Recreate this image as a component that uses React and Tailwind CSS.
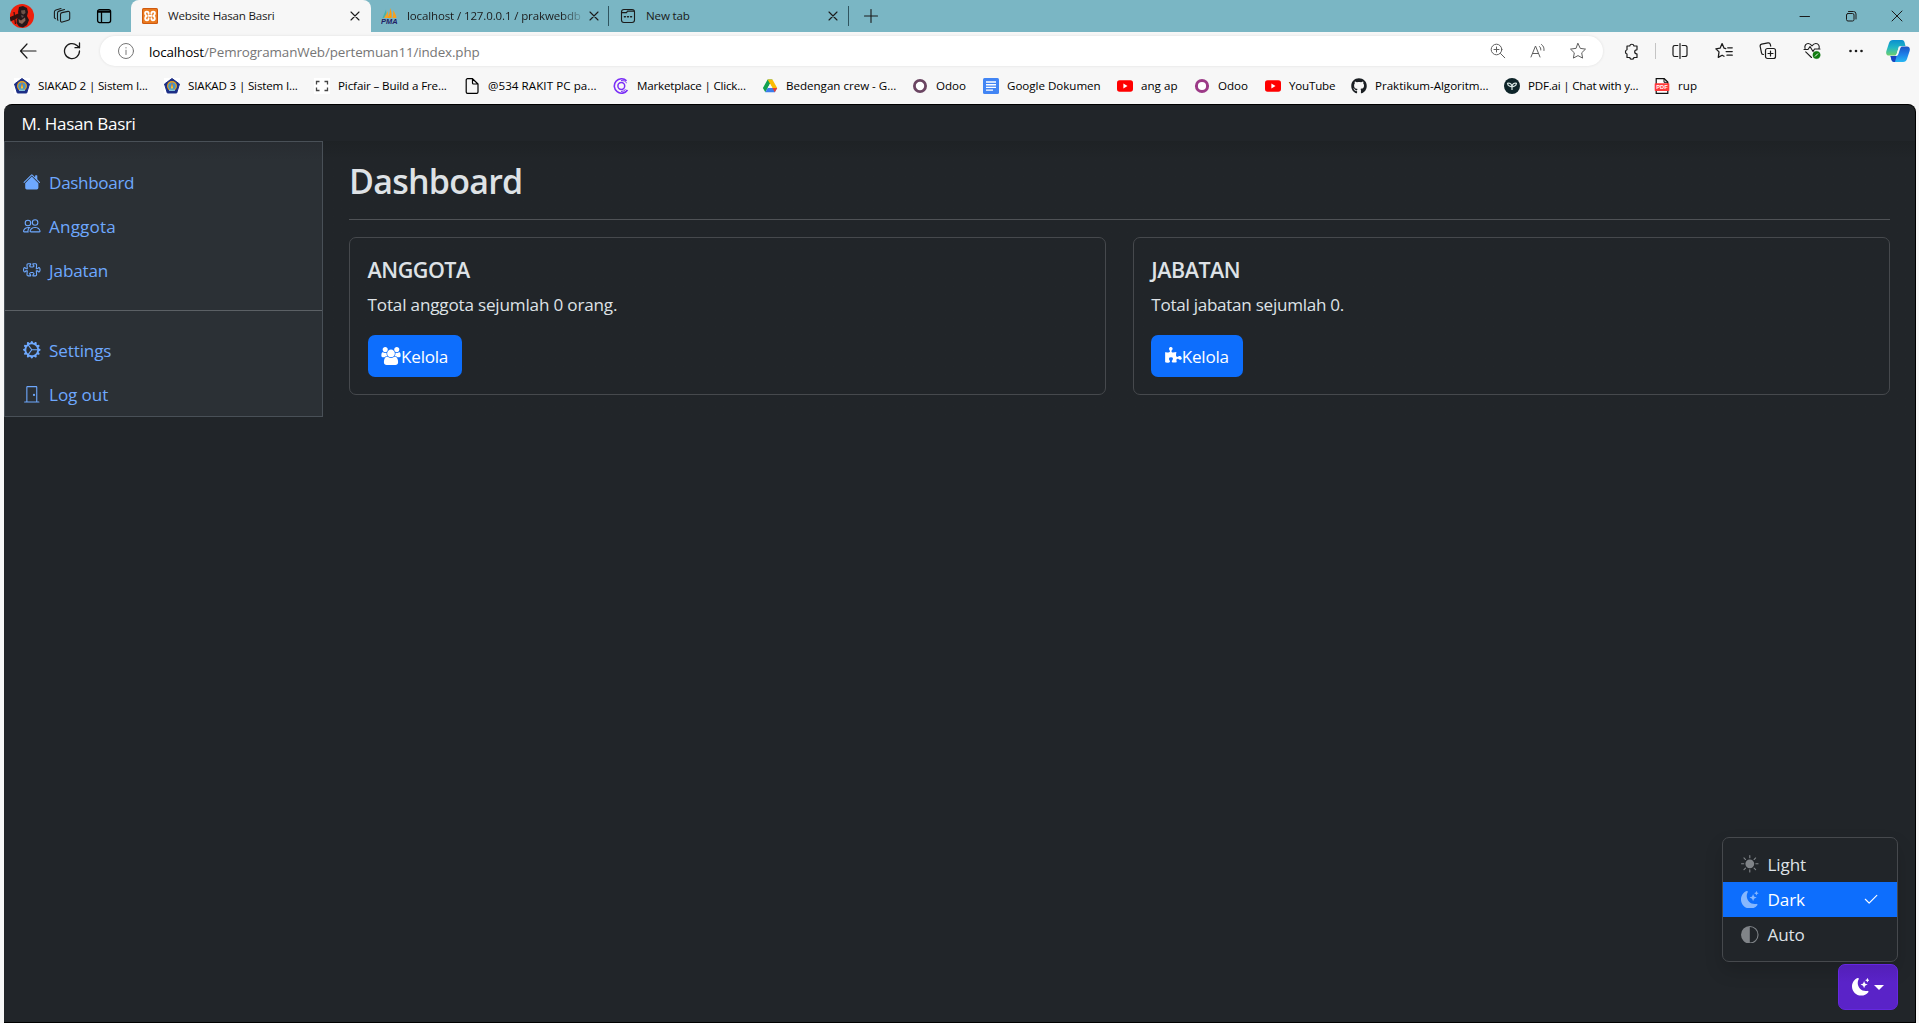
import React from "react";
import {
  BsHouseFill,
  BsPeople,
  BsPuzzle,
  BsGearWideConnected,
  BsDoorClosed,
  BsSunFill,
  BsMoonStarsFill,
  BsCircleHalf,
  BsCheck2,
} from "react-icons/bs";
import { FaGithub } from "react-icons/fa";

/* ---------- Shared stroke icon wrapper ---------- */

function Line({ size = 16, box = 16, className = "", width = 1.1, children }) {
  return (
    <svg
      width={size}
      height={size}
      viewBox={`0 0 ${box} ${box}`}
      fill="none"
      stroke="currentColor"
      strokeWidth={width}
      strokeLinecap="round"
      strokeLinejoin="round"
      className={`block shrink-0 ${className}`}
    >
      {children}
    </svg>
  );
}

const CloseIcon = ({ className }) => (
  <Line size={10} box={10} className={className}>
    <path d="M1 1l8 8M9 1l-8 8" />
  </Line>
);

/* ---------- Tab strip ---------- */

function Avatar() {
  return (
    <svg width="24" height="24" viewBox="0 0 24 24" className="block shrink-0">
      <circle cx="12" cy="12" r="12" fill="#ee200d" />
      <path d="M9 3l4-1 4 2 1 4-1 4 2 4-2 5-4 2.500-4-1-2.500-3.500.5-4 2-3-1-4z" fill="#26171a" />
      <path d="M.5 13.500l8-3.500 1 2.500-8.500 4zM4 8l1.500 12" stroke="#35120f" strokeWidth="1.200" fill="#35120f" />
      <path d="M11 6.500l4-.5.500 3-2 1.500-2-1z" fill="#6e5148" />
      <path d="M8.500 15l2.500 1.500 4-3 .5 3-3.500 3.500-3-1.500z" fill="#8a6355" />
      <path d="M11 11l3 1-2 2z" fill="#5c4a4a" />
    </svg>
  );
}

function XamppIcon() {
  return (
    <svg width="16" height="16" viewBox="0 0 16 16" className="block shrink-0">
      <rect width="16" height="16" rx="1.500" fill="#cf5a0e" />
      <rect x="1" y="1" width="14" height="14" rx="1" fill="#ea7a1f" />
      <g fill="none" stroke="#fff" strokeWidth="1.900" strokeLinejoin="round" strokeLinecap="round">
        <path d="M6.600 5.900C6.800 4.300 6 3.600 4.800 3.600S2.900 4.400 3.200 5.800C3.400 6.900 4 7.400 4.700 7.900 3.700 8.400 3.200 9.100 3.200 10.300c0 1.300.6 2.100 1.800 2.100s1.700-.8 1.600-2.300" />
        <path d="M9.400 5.900C9.200 4.300 10 3.600 11.200 3.600s1.900.8 1.600 2.200c-.2 1.100-.8 1.600-1.500 2.100 1 .5 1.500 1.200 1.500 2.400 0 1.300-.6 2.100-1.800 2.100s-1.700-.8-1.600-2.300" />
        <path d="M6.600 7.900h2.800" />
      </g>
    </svg>
  );
}

function PmaIcon() {
  return (
    <svg width="17" height="16" viewBox="0 0 17 16" className="block shrink-0">
      <path d="M5 1.500L6 10H1.500z" fill="#45b3ae" />
      <path d="M7 3l.5 7H3z" fill="#f0a32b" />
      <path d="M9 0c1.500 3 2 6 1.500 10H6.500C8.500 7 9 4 9 0z" fill="#ff9a0a" />
      <path d="M12 2.500c2 2 3 4.500 3.500 7.500h-4c.8-2.500.9-5 .5-7.500z" fill="#f8a01c" />
      <text
        x="0"
        y="15.600"
        fontSize="6.800"
        fontWeight="700"
        fontStyle="italic"
        textLength="16.500"
        lengthAdjust="spacingAndGlyphs"
        fill="#1f2064"
        fontFamily="Liberation Sans, sans-serif"
      >
        PMA
      </text>
    </svg>
  );
}

function TabStrip() {
  return (
    <div className="flex h-8 items-center bg-[#7ab6c4] text-[#1b1b1b]">
      <div className="flex w-[131px] shrink-0 items-center pl-[10px]">
        <Avatar />
        <Line size={18} box={18} className="ml-[19px]">
          <path d="M9 5.600l6-1.200c1-.2 1.700.3 1.700 1.300v5.800c0 1-.5 1.500-1.400 1.700l-6 1.800c-1 .3-1.800-.2-1.800-1.300V7.500c0-1 .5-1.700 1.500-1.900z" />
          <path d="M5 13.200l-.5-.4V6c0-1 .5-1.600 1.500-1.900l5.500-1.600M2.400 11.700l-1-.9V5c0-1 .5-1.500 1.500-1.900L8 1.500" />
        </Line>
        <Line size={16} className="ml-[25px] text-black" width={1.300}>
          <rect x="1.600" y="1.600" width="13" height="13" rx="2" />
          <path d="M2 3.200h12M2 4.200h12M5.500 4v10" />
        </Line>
      </div>
      <div className="flex h-8 w-[240px] shrink-0 items-center rounded-t-lg bg-[#f7f7f7] pl-[11px]">
        <XamppIcon />
        <span className="ml-[10px] flex-1 whitespace-nowrap text-[11.600px] tracking-[-0.22px]">Website Hasan Basri</span>
        <CloseIcon className="mr-[11px]" />
      </div>
      <div className="flex h-8 w-[237px] shrink-0 items-center pl-[10px]">
        <PmaIcon />
        <span className="ml-[9px] w-[176px] overflow-hidden whitespace-nowrap bg-gradient-to-r from-[#1b1b1b] from-88% to-[#1b1b1b]/10 bg-clip-text text-[11.500px] tracking-[-0.12px] text-transparent">
          localhost / 127.0.0.1 / prakwebdb
        </span>
        <CloseIcon className="ml-[6px]" />
      </div>
      <div className="h-5 w-px bg-[#2f5560]" />
      <div className="flex h-8 w-[239px] shrink-0 items-center pl-[11px]">
        <Line size={16}>
          <rect x="1.500" y="1.500" width="13" height="13" rx="2.500" />
          <path d="M2 4.600h4.500l1-1.500h6.500" />
          <path d="M4.500 8.700h.8M7.600 8.700h.8M10.700 8.700h.8" strokeWidth="1.600" />
        </Line>
        <span className="ml-[10px] flex-1 text-[11.600px] tracking-[-0.18px]">New tab</span>
        <CloseIcon className="mr-[10px]" />
      </div>
      <div className="h-5 w-px bg-[#2f5560]" />
      <Line size={14} box={14} className="ml-[15px]">
        <path d="M7 .5v13M.5 7h13" />
      </Line>
      <div className="ml-auto flex items-center pr-4">
        <Line size={12} box={12} width={1}>
          <path d="M1 6.500h9.500" />
        </Line>
        <Line size={12} box={12} width={1} className="ml-[34px]">
          <rect x="1.500" y="3.500" width="7.500" height="7.500" rx="1.500" />
          <path d="M3.500 1.500h5a2.500 2.500 0 0 1 2.500 2.500v5" />
        </Line>
        <Line size={12} box={12} width={1} className="ml-[34px]">
          <path d="M1 1l10 10M11 1L1 11" />
        </Line>
      </div>
    </div>
  );
}

/* ---------- Address bar ---------- */

function CopilotIcon() {
  return (
    <svg width="24" height="24" viewBox="0 0 24 24" className="block shrink-0">
      <defs>
        <linearGradient id="cpA" x1="0" y1="0" x2="0" y2="1">
          <stop offset="0" stopColor="#0a8fd0" />
          <stop offset=".5" stopColor="#22b7c4" />
          <stop offset="1" stopColor="#6fd06d" />
        </linearGradient>
        <linearGradient id="cpB" x1="0" y1="0" x2="0" y2="1">
          <stop offset="0" stopColor="#1b52c4" />
          <stop offset=".5" stopColor="#1f7fe8" />
          <stop offset="1" stopColor="#27b8f2" />
        </linearGradient>
      </defs>
      <path d="M7 1h9c1.500 0 2.200 1 2.600 2.500L19.500 7h-4c-2 0-2.700 1-3.300 3l-1.400 4.500c-.5 1.500-1.300 2-2.800 2H3c-2.500 0-3.300-2-2.600-4.500L3 4c.7-2 1.800-3 4-3z" fill="url(#cpA)" />
      <path d="M17 23H8c-1.500 0-2.200-1-2.600-2.500L4.500 17h4c2 0 2.700-1 3.300-3l1.400-4.500c.5-1.500 1.300-2 2.800-2h5c2.500 0 3.300 2 2.600 4.500L21 20c-.7 2-1.800 3-4 3z" fill="url(#cpB)" />
      <path d="M4.500 17h6l-1.500 6H8c-1.500 0-2.200-1-2.600-2.500z" fill="#1a43c0" />
      <path d="M12.800 7.500h3.700c-1.400.3-2 1-2.400 2.200l-1.600 5c-.4 1.300-1 2-2.200 2.300H8.800c1.300-.5 1.600-1 2-2.300l1.500-5z" fill="#f7f7f7" />
    </svg>
  );
}

function AddressBar() {
  return (
    <div className="flex h-[38px] items-center bg-[#f7f7f7] text-[#1b1b1b]">
      <Line size={18} box={18} className="ml-[19px]" width={1.200}>
        <path d="M8 2L1.500 9 8 16M1.500 9h15.500" />
      </Line>
      <Line size={18} box={18} className="ml-[26px]" width={1.300}>
        <path d="M16.500 9A7.500 7.500 0 1 1 14 3.500l2.500 2.200M16.500 1v4.700h-4.500" />
      </Line>
      <div className="ml-[19px] flex h-[30px] w-[1503px] shrink-0 items-center rounded-full bg-white pl-[18px] text-[#767676] shadow-[0_0_3px_rgba(0,0,0,0.10)]">
        <Line size={16} width={1}>
          <circle cx="8" cy="8" r="7.500" />
          <path d="M8 7.200v4.300M8 4.600v.4" />
        </Line>
        <span className="ml-[15px] flex-1 whitespace-nowrap pt-[2px] text-[13.400px] tracking-[-0.12px]">
          <span className="text-black">localhost</span>/PemrogramanWeb/pertemuan11/index.php
        </span>
        <Line size={16} className="text-[#5f5f5f]" width={1}>
          <circle cx="6.500" cy="6.500" r="5.300" />
          <path d="M10.500 10.500l4.300 4.300M6.500 4v5M4 6.500h5" />
        </Line>
        <Line size={16} className="ml-[24px] text-[#5f5f5f]" width={1}>
          <path d="M1 14L5.500 3 10 14M2.600 10.500h5.800M9.500 3.500c1 .8 1.400 2 1.300 3.500M11.500 1.500c2 1.400 2.800 3.500 2.500 6" />
        </Line>
        <Line size={18} box={18} className="mr-[16px] ml-[23px] text-[#5f5f5f]" width={1}>
          <path d="M9 1.500l2.300 4.900 5.200.7-3.800 3.700.9 5.300L9 13.600l-4.600 2.500.9-5.300L1.500 7.100l5.200-.7z" />
        </Line>
      </div>
      <Line size={17} box={17} className="ml-[20px]" width={1.200}>
        <path d="M4 3h2.700a2.200 2.200 0 0 1 4.300 0h3v3.500a.3.3 0 0 1-.3.300 2 2 0 0 0 0 4 .3.300 0 0 1 .3.300V14.500H11a2.200 2.200 0 0 1-4.300 0H4V11a2.200 2.200 0 0 1 0-4.200z" />
      </Line>
      <div className="ml-[15px] h-4 w-px bg-[#c4c4c4]" />
      <Line size={16} className="ml-[16px]" width={1.200}>
        <path d="M5.800 2.500H2.800a1.800 1.800 0 0 0-1.800 1.800v7.400a1.800 1.800 0 0 0 1.800 1.800h3M10.200 2.500h3A1.800 1.800 0 0 1 15 4.300v7.400a1.800 1.800 0 0 1-1.800 1.800h-3M8 .6v14.800" />
      </Line>
      <Line size={18} box={17} className="ml-[27px]" width={1.200}>
        <path d="M10.200 6.200L8.600 5.800 6.700 1.500 4.800 5.800.8 6.400l3 2.900-.7 5.200 3.600-2 1.800 1M12 5.500h4.300M10.500 9h5.800M11.300 12.500h5" />
      </Line>
      <Line size={18} box={18} className="ml-[26px]" width={1.200}>
        <rect x="6.500" y="6.500" width="10" height="10" rx="2" />
        <path d="M11.500 9v5M9 11.500h5M4.500 12.500c-1.300 0-1.800-.6-2-1.700L1.200 4.500c-.3-1.300.3-2 1.400-2.300L9 .9c1.200-.2 2 .3 2.300 1.500l.4 1.800" />
      </Line>
      <Line size={18} box={18} className="ml-[26px]" width={1.100}>
        <path d="M8.500 15.500L2.700 9.800M2 6.500C1.300 3.500 3 1.500 5.200 1.500 7 1.500 8 2.500 9 3.800c1-1.300 2-2.300 3.800-2.300 2.600 0 4.400 2.600 3 5.500M1 7.500h4L7 4.500l3 5 1.500-2.500h5.500" />
        <circle cx="13.500" cy="13" r="3.700" fill="#107c10" stroke="#107c10" strokeWidth=".3" />
        <path d="M12.300 14.200l2.400-2.400" stroke="#fff" strokeWidth="1" />
      </Line>
      <svg width="16" height="4" viewBox="0 0 16 4" className="ml-[27px] block shrink-0" fill="currentColor">
        <circle cx="2.500" cy="2" r="1.300" />
        <circle cx="8" cy="2" r="1.300" />
        <circle cx="13.500" cy="2" r="1.300" />
      </svg>
      <div className="mr-[9px] ml-auto">
        <CopilotIcon />
      </div>
    </div>
  );
}

/* ---------- Bookmarks bar ---------- */

const SiakadIcon = () => (
  <svg width="16" height="16" viewBox="0 0 16 16" className="block">
    <rect width="16" height="16" fill="#fff" />
    <path d="M8 .5l7.500 5.500L12.700 15H3.300L.5 6z" fill="#1d2f86" stroke="#1d2f86" strokeLinejoin="round" />
    <circle cx="8" cy="8" r="5" fill="#e9a11c" />
    <circle cx="8" cy="8.300" r="3.700" fill="#3f97cf" />
    <path d="M8 4l1.500 6h-3z" fill="#d9622a" />
    <path d="M8 6l1.200 4.500H6.800z" fill="#f6cf3a" />
    <path d="M5 12.300h6" stroke="#7ec8e8" strokeWidth="1.200" />
  </svg>
);
const PicfairIcon = () => (
  <svg width="16" height="16" viewBox="0 0 16 16" className="block">
    <rect width="16" height="16" fill="#fff" />
    <path d="M5.500 3.500H2.500v3M2.500 9.500v3h3M10.500 3.500h3v3M13.500 9.500v3h-3" fill="none" stroke="#444" strokeWidth="1.300" />
  </svg>
);
const FileIcon = () => (
  <Line width={1.200}>
    <path d="M3.500.7h5L14 6v8a1.300 1.300 0 0 1-1.300 1.300H3.500A1.300 1.300 0 0 1 2.200 14V2A1.300 1.300 0 0 1 3.500.7zM8.500.7V5A1 1 0 0 0 9.500 6H14" />
  </Line>
);
const ClickerIcon = () => (
  <svg width="16" height="16" viewBox="0 0 16 16" className="block" fill="none" stroke="#7b2ff7">
    <path d="M13.500 2.800A7.200 7.200 0 1 0 14.500 12" strokeWidth="1.600" />
    <circle cx="8.300" cy="8" r="3.400" strokeWidth="1.500" />
    <path d="M13.800 5A6 6 0 0 0 8 2.500M8 13.500a6 6 0 0 0 4.500-2" strokeWidth="1" />
  </svg>
);
const DriveIcon = () => (
  <svg width="16" height="16" viewBox="0 0 16 16" className="block">
    <path d="M5.600 1.500h4.800L8 5.700 3.300 14.300.9 10z" fill="#12a150" />
    <path d="M5.600 1.500h4.800L15.200 10h-4.800z" fill="#fbbc04" />
    <path d="M3.300 14.300L5.700 10h9.500l-2.400 4.300z" fill="#3b7ded" />
    <path d="M10.400 10h4.800l-2.400 4.300z" fill="#e94235" />
    <path d="M5.700 10L8 5.700 10.400 10z" fill="#f7f7f7" />
  </svg>
);
const Ring = ({ color, width }) => (
  <svg width="16" height="16" viewBox="0 0 16 16" className="block">
    <circle cx="8" cy="8" r="5.600" fill="#fff" stroke={color} strokeWidth={width} />
  </svg>
);
const DocsIcon = () => (
  <svg width="16" height="16" viewBox="0 0 16 16" className="block">
    <rect width="16" height="16" rx="1.500" fill="#4285f4" />
    <path d="M3 4h10M3 6.700h10M3 9.400h10M3 12.100h7" stroke="#fff" strokeWidth="1.400" />
  </svg>
);
const YtIcon = () => (
  <svg width="16" height="16" viewBox="0 0 16 16" className="block">
    <rect y="2.300" width="16" height="11.400" rx="2.600" fill="#f00" />
    <path d="M6.400 5.600v4.800L10.500 8z" fill="#fff" />
  </svg>
);
const PdfAiIcon = () => (
  <svg width="16" height="16" viewBox="0 0 16 16" className="block">
    <circle cx="8" cy="8" r="8" fill="#0e2429" />
    <path
      d="M8 12V8.500M8 8.500C6.500 9 4 8 3.500 5.300 5.500 4.700 7.500 5.500 8 8.500zM8 8.500C9.500 9 12 8 12.500 5.300 10.500 4.700 8.500 5.500 8 8.500z"
      fill="none"
      stroke="#d6e4e2"
      strokeWidth="1.200"
      strokeLinejoin="round"
    />
  </svg>
);
const PdfIcon = () => (
  <svg width="16" height="16" viewBox="0 0 16 16" className="block">
    <path d="M2.200.7h8L13.800 4v11.300H2.200z" fill="#fff" stroke="#111" strokeWidth="1.200" />
    <path d="M10 .5V4.300h4" fill="none" stroke="#111" strokeWidth="1" />
    <rect x=".7" y="5.300" width="14.600" height="7.600" rx=".6" fill="#ff3a3a" />
    <text
      x="2.200"
      y="11.400"
      fontSize="6"
      fontWeight="700"
      textLength="11.600"
      lengthAdjust="spacingAndGlyphs"
      fill="#fff"
      fontFamily="Liberation Sans, sans-serif"
    >
      PDF
    </text>
  </svg>
);

const bookmarks = [
  { label: "SIAKAD 2 | Sistem I...", icon: <SiakadIcon />, style: "w-[150px] tracking-[-0.17px]" },
  { label: "SIAKAD 3 | Sistem I...", icon: <SiakadIcon />, style: "w-[150px] tracking-[-0.17px]" },
  { label: "Picfair – Build a Fre...", icon: <PicfairIcon />, style: "w-[150px] tracking-[-0.12px]" },
  { label: "@534 RAKIT PC pa...", icon: <FileIcon />, style: "w-[149px] tracking-[0.06px]" },
  { label: "Marketplace | Click...", icon: <ClickerIcon />, style: "w-[149px] tracking-[-0.2px]" },
  { label: "Bedengan crew - G...", icon: <DriveIcon />, style: "w-[150px] tracking-[-0.02px]" },
  { label: "Odoo", icon: <Ring color="#6b4562" width={2.800} />, style: "w-[71px] tracking-[-0.05px]" },
  { label: "Google Dokumen", icon: <DocsIcon />, style: "w-[134px] tracking-[-0.03px]" },
  { label: "ang ap", icon: <YtIcon />, style: "w-[77px] tracking-[0.02px]" },
  { label: "Odoo", icon: <Ring color="#9c3a87" width={3} />, style: "w-[71px] tracking-[-0.05px]" },
  { label: "YouTube", icon: <YtIcon />, style: "w-[86px] tracking-[-0.2px]" },
  { label: "Praktikum-Algoritm...", icon: <FaGithub className="block size-4 text-[#1b1f23]" />, style: "w-[153px] tracking-[-0.03px]" },
  { label: "PDF.ai | Chat with y...", icon: <PdfAiIcon />, style: "w-[150px] tracking-[-0.22px]" },
  { label: "rup", icon: <PdfIcon />, style: "w-[60px] tracking-[0.1px]" },
];

function BookmarksBar() {
  return (
    <div className="flex h-[34px] items-center bg-[#f7f7f7] pb-[2px] pl-[14px]">
      {bookmarks.map((b, i) => (
        <div key={i} className={`flex shrink-0 items-center gap-2 ${b.style}`}>
          <span className="shrink-0">{b.icon}</span>
          <span className="whitespace-nowrap text-[11.600px] text-black">{b.label}</span>
        </div>
      ))}
    </div>
  );
}

/* ---------- Web page ---------- */

function NavItem({ icon: Icon, label, spacing }) {
  return (
    <a className={`flex h-[44px] items-center gap-[8.500px] px-[18px] text-[17.100px] text-[#6ea8fe] ${spacing}`}>
      <Icon className="size-[17.600px] shrink-0" />
      <span className="pt-[2px]">{label}</span>
    </a>
  );
}

function Sidebar() {
  return (
    <nav className="flex h-[276px] w-[319px] shrink-0 flex-col border border-[#495057] bg-[#2b3035] bg-gradient-to-b from-[#282c31] to-[#2b3035] to-[18px] pt-[18px]">
      <NavItem icon={BsHouseFill} label="Dashboard" spacing="tracking-[-0.35px]" />
      <NavItem icon={BsPeople} label="Anggota" spacing="tracking-[0.15px]" />
      <NavItem icon={BsPuzzle} label="Jabatan" spacing="tracking-[-0.15px]" />
      <hr className="my-[18px] mb-[17px] border-[#5b6065]" />
      <NavItem icon={BsGearWideConnected} label="Settings" spacing="tracking-[-0.15px]" />
      <NavItem icon={BsDoorClosed} label="Log out" spacing="tracking-[-0.1px]" />
    </nav>
  );
}

const UsersGlyph = () => (
  <svg width="20" height="18" viewBox="0 0 1920 1792" fill="currentColor" className="block">
    <path d="M593 896q-162 5-265 128H194q-82 0-138-40.500T0 865q0-353 124-353 6 0 43.500 21t97.500 42.500T384 597q67 0 133-23-5 37-5 66 0 139 81 256zm1071 637q0 120-73 189.500t-194 69.500H523q-121 0-194-69.500T256 1533q0-53 3.500-103.500t14-109T300 1212t43-97.500 62-81 85.500-53.500T602 960q10 0 43 21.500t73 48 107 48 135 21.500 135-21.500 107-48 73-48 43-21.500q61 0 111.500 20t85.500 53.500 62 81 43 97.500 26.500 108.500 14 109 3.500 103.500zM640 256q0 106-75 181t-181 75-181-75-75-181 75-181T384 0t181 75 75 181zm704 384q0 159-112.500 271.500T960 1024 688.500 911.500 576 640t112.500-271.500T960 256t271.500 112.500T1344 640zm576 225q0 78-56 118.500t-138 40.500h-134q-103-123-265-128 81-117 81-256 0-29-5-66 66 23 133 23 59 0 119-21.500t97.500-42.500 43.500-21q124 0 124 353zm-128-609q0 106-75 181t-181 75-181-75-75-181 75-181 181-75 181 75 75 181z" />
  </svg>
);

const PuzzleGlyph = () => (
  <svg width="17" height="18" viewBox="0 0 1664 1792" fill="currentColor" className="block">
    <path
      transform="translate(-91 0)"
      d="M1755 1083q0 81-44.500 135t-123.500 54q-41 0-77.500-17.500t-59-38-56.500-38-71-17.500q-110 0-110 124 0 39 16 115t15 115v5q-22 0-33 1-34 3-97.500 11.500t-115.500 13.500-98 5q-61 0-103-26.500t-42-83.500q0-37 17.500-71t38-56.500 38-59 17.500-77.500q0-79-54-123.500t-135-44.500q-84 0-143 45.500t-59 127.500q0 43 15 83t33.500 64.500 33.500 53 15 50.500q0 45-46 89-37 35-117 35-95 0-245-24-9-2-27.500-4t-27.500-4l-13-2q-1 0-3-1-2 0-2-1V508q2 1 17.500 3.500t34 5 21.500 3.500q150 24 245 24 80 0 117-35 46-44 46-89 0-22-15-50.500t-33.500-53-33.500-64.500-15-83q0-82 59-127.500T646-4q80 0 134 44.500T834 164q0 41-17.500 77.500t-38 59-38 56.500-17.500 71q0 57 42 83.500t103 26.500q64 0 180-15t163-17v2q-1 2-3.500 17.500t-5 34-3.500 21.500q-24 150-24 245 0 80 35 117 44 46 89 46 22 0 50.500-15t53-33.500 64.500-33.500 83-15q82 0 127.500 59t45.500 143z"
    />
  </svg>
);

function StatCard({ title, text, textSpacing, icon, buttonWidth }) {
  return (
    <div className="flex h-[158px] flex-1 flex-col items-start rounded-[7px] border border-[#46494d] px-[17.600px] pt-[19px]">
      <h5 className="text-[21.500px] leading-[26px] font-semibold tracking-[-0.48px] text-[#dee2e6]">{title}</h5>
      <p className={`mt-[9px] text-[17.100px] leading-[26px] text-[#dee2e6] ${textSpacing}`}>{text}</p>
      <button
        type="button"
        className={`mt-[17px] flex h-[42px] items-center rounded-[7px] bg-[#0d6efd] pl-[13.500px] text-[17.100px] tracking-[-0.25px] text-white ${buttonWidth}`}
      >
        {icon}
        <span className="pt-[2px]">Kelola</span>
      </button>
    </div>
  );
}

function ThemeSwitcher() {
  const row = "flex h-[35.200px] items-center px-[18px] text-[17.100px] tracking-[-0.15px]";
  return (
    <div className="absolute right-[17px] bottom-[12px] flex flex-col items-end gap-[2px]">
      <div className="w-[176px] rounded-[7px] border border-[#46494d] bg-[#212529] py-[8.800px] text-[#dee2e6] shadow-[0_9px_18px_rgba(0,0,0,0.15)]">
        <div className={row}>
          <BsSunFill className="mr-[9px] size-[17.600px] opacity-50" />
          <span className="pt-px">Light</span>
        </div>
        <div className={`${row} bg-[#0d6efd] text-white`}>
          <BsMoonStarsFill className="mr-[9px] size-[17.600px] opacity-50" />
          <span className="pt-px">Dark</span>
          <BsCheck2 className="-mr-px ml-auto size-[17.600px]" />
        </div>
        <div className={row}>
          <BsCircleHalf className="mr-[9px] size-[17.600px] opacity-50" />
          <span className="pt-px">Auto</span>
        </div>
      </div>
      <button
        type="button"
        className="flex h-[46px] w-[60px] items-center justify-center gap-[5px] rounded-[7px] border border-[#6528e0] bg-gradient-to-b from-[#531fb8] to-[#5a23c8] to-40% text-white"
      >
        <BsMoonStarsFill className="size-[17.600px]" />
        <span className="border-x-[5px] border-t-[5px] border-x-transparent border-t-white" />
      </button>
    </div>
  );
}

function WebPage() {
  return (
    <div className="relative ml-1 h-[919px] w-[1912px] overflow-hidden rounded-t-lg border-t border-r border-b border-black bg-[#212529]">
      <header className="flex h-[36px] items-center pt-[2px] pl-[17.500px] text-[17px] tracking-[-0.3px] text-white">M. Hasan Basri</header>
      <div className="flex items-start bg-gradient-to-b from-[#1e2225] to-[#212529] to-[18px]">
        <Sidebar />
        <main className="flex-1 pr-[25px] pl-[26px]">
          <h1 className="mt-[19px] text-[34px] leading-[42px] font-semibold tracking-[-0.75px] text-[#dee2e6]">Dashboard</h1>
          <hr className="mt-[17px] mb-[17px] border-[#4f5256]" />
          <div className="flex gap-[26.400px]">
            <StatCard
              title="ANGGOTA"
              text="Total anggota sejumlah 0 orang."
              textSpacing="tracking-[-0.18px]"
              icon={<UsersGlyph />}
              buttonWidth="w-[94px]"
            />
            <StatCard
              title="JABATAN"
              text="Total jabatan sejumlah 0."
              textSpacing="tracking-[-0.28px]"
              icon={<PuzzleGlyph />}
              buttonWidth="w-[92px]"
            />
          </div>
        </main>
      </div>
      <ThemeSwitcher />
    </div>
  );
}

export default function App() {
  return (
    <div className="h-[1023px] w-[1919px] overflow-hidden bg-[#f7f7f7] font-['Open_Sans','Noto_Sans',sans-serif]">
      <TabStrip />
      <AddressBar />
      <BookmarksBar />
      <WebPage />
    </div>
  );
}
